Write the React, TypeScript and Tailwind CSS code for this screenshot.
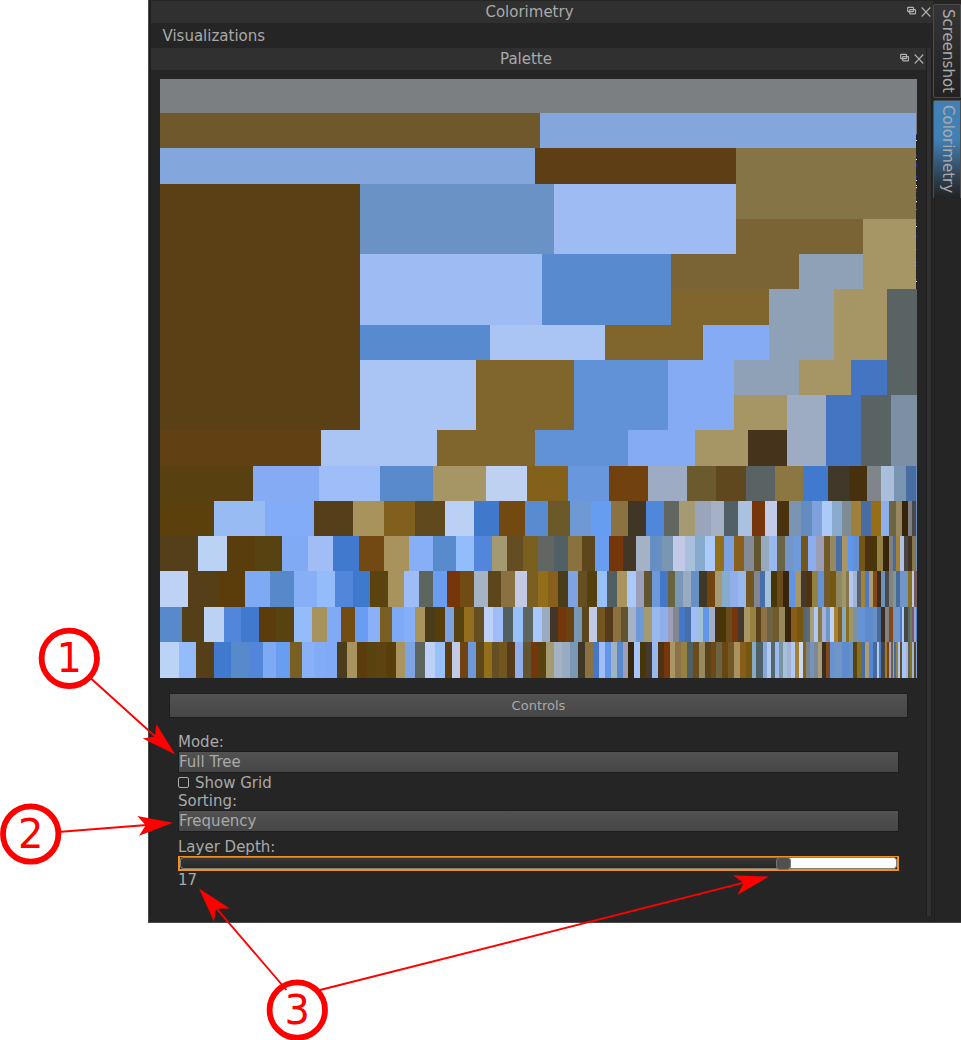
import React from "react";

// Each layer of the tree: "end:colour" spans, read left to right from LEFT.
const LEFT = 160;
const TOP = 79;
const EDGES = [79, 113, 148, 184, 219, 254, 289, 325, 360, 395, 430, 466, 501, 536, 571, 607, 642, 678];

const LAYERS: string[] = [
  "917:7b7f82",
  "540:6e582c 916:83a6dc 917:252525",
  "535:83a6dc 736:5d3e15 916:857546 917:252525",
  "360:5b4016 554:6b92c5 736:9ebcf3 916:857546 917:252525",
  "360:5b4016 554:6b92c5 736:9ebcf3 863:7a6436 916:a69665 917:252525",
  "360:5b4016 542:9ebcf3 671:588acf 799:7a6436 863:8fa1b7 916:a69665 917:252525",
  "360:5b4016 542:9ebcf3 671:588acf 769:80652c 834:8fa1b7 887:a69665 917:596363",
  "360:5b4016 490:588acf 605:aac5f3 703:80652c 769:84abf3 834:8fa1b7 887:a69665 917:596363",
  "360:5b4016 476:aac5f3 574:80652c 668:6191d6 734:84abf3 799:8fa1b7 851:a69665 887:4375c2 917:596363",
  "360:5b4016 476:aac5f3 574:80652c 668:6191d6 734:84abf3 787:a69665 826:9dacc3 861:4375c2 891:596363 917:7d8fa2",
  "321:614014 437:aac5f3 535:80652c 628:6191d6 695:84abf3 748:a69665 787:46331b 826:9dacc3 861:4375c2 891:596363 917:7d8fa2",
  "253:584010 319:84abf3 380:9fbdf8 433:588acc 486:a69665 527:bfd1f1 568:84611b 609:6897de 648:71420f 687:9dacc3 716:6b5a2e 746:5f481d 775:596363 803:8c7641 828:4079ce 849:403828 867:46300d 881:80858c 894:a9bedb 906:7895b2 916:476da3 917:6f92bd",
  "214:5c400c 265:99bbf4 314:82acf7 353:553f1a 384:a9935d 415:80601c 445:60491d 474:bad0f5 499:4078cc 525:724910 548:588bcf 570:6c592a 591:6e99d4 611:679df0 628:8b7341 646:403626 664:5187da 679:616760 695:a69a72 711:9aa5bc 724:a5b2c5 738:516065 752:aac1df 765:76350b 777:c2cbe8 789:4b320e 801:7995b3 812:658cc0 822:7fa2df 832:abcaf8 842:88abce 851:808c95 861:9f803d 871:496da3 881:956e1b 889:8fafeb 896:6b6541 902:978862 908:36250a 912:817f80 916:48494c 917:6f92bd",
  "198:543f1a 227:bcd2f5 255:5a3d0c 282:574312 308:80aaf3 333:a0bdf6 359:4079cd 384:724912 409:a9935d 433:86aff8 456:588bcc 474:93bcfa 492:5186da 507:a49a72 523:644c23 538:79601f 554:616760 568:506064 582:8a7140 595:5c461b 609:689df2 623:76360c 636:423727 650:a5b2c5 662:668ec3 673:7997b2 685:c2cae8 695:a8c0dc 705:87abce 715:abcbfa 724:936e1b 734:7ca1e0 744:895f1d 754:838b95 761:635430 769:97aabd 777:98b9ef 785:6a6444 793:7395c8 801:6f9bda 808:715620 816:8cadee 824:9c9eb5 830:71592a 836:968960 842:476ea7 848:a89765 853:6196ee 859:6591d4 865:755616 871:4d3212 877:473607 883:958241 889:37260a 893:817f80 896:466ba3 900:a68236 904:b1c0df 908:454545 912:433222 916:86784a 917:6f92bd",
  "188:bdd2f4 218:543f19 245:5b3d0c 270:7eaaf3 294:5789c9 317:86aff7 335:94bcfb 353:5186da 370:3f79ce 388:5b430f 404:a9935d 419:a0bcf6 433:5d665e 447:699df1 460:77350c 474:704b13 488:a6b3c5 501:5c461c 515:8b7141 527:c2cae6 538:796022 548:936e1a 558:895f1d 568:4b3c19 578:7da3e3 587:664e23 597:543f0e 607:98c1fa 617:506062 627:aa945d 636:aac9fa 644:9c9fb7 652:635430 660:6d99d9 668:4477ca 675:69633f 683:7998b5 691:98abc0 699:6790c4 707:403826 715:724411 722:a69a71 730:87aacf 738:8faeea 746:98b9ef 754:715620 760:828690 765:476ea8 771:a4c1d9 777:473606 783:6a4c1b 789:37260b 795:5e93e8 801:a89764 806:44382f 812:4e3313 818:958241 824:6592d6 830:725a2c 836:755712 842:908862 846:a0966b 849:877849 853:b1c8ef 857:a5b2d8 861:58636a 865:a68236 869:4b7cc3 873:ad9b71 877:804917 881:3b2c1e 885:6f92bd 889:4a4a4a 893:828284 896:809790 900:476a98 908:7095c8 912:88701f 914:c2cae8 917:725c5c",
  "182:588acb 204:543f18 224:bcd2f5 241:5186da 259:4079cd 276:5b3c0c 294:584310 312:94bcfb 327:a9935d 341:80aaf3 355:724c12 368:699df1 380:8ab1f7 392:796022 404:7eaaf5 415:86aff8 425:aa945d 435:4b3c19 445:583e0a 454:7da3e3 464:564310 474:936e1e 484:664e23 493:bcd0f8 503:a0bbf5 513:506062 523:98c1fa 533:5d665e 542:a6c8fa 550:98abc0 558:423727 566:76360d 574:6b420f 582:7998b5 589:5c461b 597:c2cae6 605:715620 613:563a1a 621:8b7140 628:635430 636:a5b2c6 644:6d99d9 652:a69a71 660:98b9ef 668:8faeea 673:9c9fb7 679:828690 685:4477ca 691:476ea8 697:a0bdf7 703:a1bfd7 709:6196e8 715:a1aec5 720:4b3213 726:473606 732:6a4c1b 738:77350c 744:44382f 750:a89764 756:958241 761:594219 767:8d7247 773:6a6444 779:71592a 785:968960 791:37260a 797:895c19 803:755712 806:56676c 810:5c6976 814:a69d7d 818:b1c8ef 822:86784a 826:a5b2d8 830:7095c8 834:c2d2f1 838:a68236 842:84611b 846:86a9c5 849:88701f 853:a0966b 857:7b929f 865:6693d8 873:5d8bcb 877:6790c4 881:476a98 885:3b2c20 889:828284 893:804917 900:7095c8 902:4b7cc3 904:b1c8ef 908:454545 910:5d6762 912:6d7a66 914:725c6c 916:aaa0bd 917:5187da",
  "179:bbd3f5 196:94bcfb 214:543f19 231:4079cd 249:588acb 263:5186da 276:7eaaf3 290:699df1 302:796022 314:8ab1f7 325:82acf7 337:80aaf5 347:4b3c1b 357:aa945d 367:5b3c0c 376:584310 386:5d4310 396:583e0a 405:aa945d 415:7da3e3 425:5d665e 435:bcd0f8 445:98c1fa 452:5b3c0c 460:c2cae6 468:704310 476:6d99d9 484:5c461b 492:936e1b 499:664e23 507:715620 515:563a1a 523:8faeea 531:635430 538:76360d 546:58430f 554:a69a71 562:a5b2c5 570:98abc0 578:7998b5 585:403826 593:8b7140 599:4477ca 605:a0bdf7 611:6196e8 617:a1b2c2 623:588acb 628:9c9fb7 634:37260c 640:a6c4fa 646:473606 652:44382f 658:98b9ef 664:4e3313 670:77350c 675:a89764 681:8d7247 687:958241 693:506062 699:6a4c1b 705:968960 711:594219 716:714812 722:6a6444 728:6b4611 734:71592a 740:a89260 746:895c19 752:755712 756:86a9c5 763:506068 767:86a9d5 771:b1c8ef 775:56676c 779:98b9ef 783:7b929f 787:a4c1d9 791:a5b2d8 795:b1c8ef 799:a68236 803:c9d9f1 806:84611b 810:828284 814:7095c0 818:828690 822:a69d7d 826:3b2c20 830:804917 834:6693d8 842:7095c8 849:5d8bcb 853:6790c4 857:564513 861:88701f 865:476ea8 869:ad9b71 873:5187da 877:476a98 879:b1c8ef 881:4b7cc3 885:454545 887:a67a26 889:704310 891:aaa0bd 893:6a6444 894:82a5db 896:466ba3 898:958241 900:aac9fa 902:654c1e 906:a5c5fa 908:aab4ca 910:596363 912:88701f 914:98b9d9 916:594219 917:82a5db",
];

const SPECKS: [number, string][] = [
  [134, "#3535c0"], [140, "#fff"], [155, "#3535c0"], [159, "#fff"], [164, "#3535c0"], [166, "#3535c0"],
  [176, "#3535c0"], [180, "#fff"], [185, "#fff"], [187, "#fff"], [188, "#a04525"], [191, "#3535c0"], [197, "#3535c0"],
  [201, "#fff"], [202, "#a04525"], [209, "#a06040"], [223, "#3535c0"], [226, "#fff"], [236, "#3535c0"],
  [249, "#3535c0"], [262, "#3535c0"], [265, "#3535c0"], [279, "#3535c0"], [281, "#fff"],
];

function PaletteChart() {
  return (
    <svg className="block h-[599px] w-[757px]" viewBox={`${LEFT} ${TOP} 757 599`} shapeRendering="crispEdges">
      {LAYERS.map((layer, row) => {
        let x = LEFT;
        return layer.split(" ").map((span) => {
          const [end, colour] = span.split(":");
          const start = x;
          x = Number(end);
          return (
            <rect
              key={`${row}-${end}`}
              x={start}
              y={EDGES[row]}
              width={x - start}
              height={EDGES[row + 1] - EDGES[row]}
              fill={`#${colour}`}
            />
          );
        });
      })}
      <rect x="916" y="113" width="1" height="21" fill="#7b7f82" />
      {SPECKS.map(([y, colour]) => (
        <rect key={y} x="916" y={y} width="1" height="1" fill={colour} />
      ))}
    </svg>
  );
}

function WindowButtons() {
  return (
    <svg width="24" height="12" viewBox="0 0 24 12" fill="none" stroke="#b0b0b0" className="block">
      <rect x="0.7" y="1.4" width="5.8" height="4.2" rx="0.5" strokeWidth="1.2" />
      <rect x="2.7" y="3.6" width="5.8" height="4.2" rx="0.5" strokeWidth="1.2" />
      <path d="M14.7 1.5 23.3 10.5M23.3 1.5 14.7 10.5" strokeWidth="1.1" />
    </svg>
  );
}

function TitleBar({ title }: { title: string }) {
  return (
    <div className="flex h-[22px] w-full shrink-0 items-center bg-[#303030]">
      <span className="min-w-0 flex-1 pl-[2px] text-center">{title}</span>
    </div>
  );
}

function Combo({ value }: { value: string }) {
  return (
    <div className="flex h-[22px] items-center border border-[#1d1d1d] bg-linear-to-b from-[#525252] to-[#464646] leading-[20px]">
      <span>{value}</span>
    </div>
  );
}

function Callouts() {
  const badges: [number, number, string][] = [
    [69.3, 658.3, "1"],
    [30.7, 834, "2"],
    [297.3, 1010, "3"],
  ];
  return (
    <svg className="pointer-events-none absolute top-0 left-0 h-[1040px] w-[961px]" viewBox="0 0 961 1040">
      <g stroke="#f00" strokeWidth="1.9">
        <path d="M91 678.5 158 739M61 831.8 150 824.8M320 990 750 881.2" fill="none" />
      </g>
      <g fill="#f00">
        <path d="M175.3 754.5 156.3 724 155 736.5 142.7 738.6Z" />
        <path d="M173 822.8 137.3 816 145.7 825.2 139 835.8Z" />
        <path d="M199 888.5 229.8 908.5 216 908.8 214 921.5Z" />
        <path d="M769 876.6 732.6 875.3 743.7 882.8 737.4 895Z" />
      </g>
      {badges.map(([x, y, label]) => (
        <g key={label}>
          <circle cx={x} cy={y} r="27.7" fill="#fff" stroke="#f00" strokeWidth="5.8" />
          <text x={x} y={y + 13.8} textAnchor="middle" fontSize="40" fill="#f00">
            {label}
          </text>
        </g>
      ))}
      <path d="M286.5 990 213.5 905" stroke="#f00" strokeWidth="1.9" />
    </svg>
  );
}

export default function App() {
  return (
    <div className="relative h-[1040px] w-[961px] overflow-hidden bg-white pl-[148px] font-['DejaVu_Sans',sans-serif] text-[15px] leading-[18px] text-[#a9a9a9]">
      <div className="flex h-[923px] w-[813px] border-b border-l border-b-[#484848] border-l-[#484848] bg-[#252525]">
        <div className="mt-[1px] flex h-[915px] w-[784px] flex-col border-l-2 border-[#202020]">
          <div className="relative">
            <div className="bg-[#303030] pr-[27px]"><TitleBar title="Colorimetry" /></div>
            <div className="absolute top-[5px] right-[2px]"><WindowButtons /></div>
          </div>
          <div className="flex h-[25px] items-center pl-[11.5px]">Visualizations</div>
          <div className="flex h-[868px]">
            <div className="w-[775px]">
              <div className="relative">
                <div className="bg-[#303030] pr-[27px]"><TitleBar title="Palette" /></div>
                <div className="absolute top-[5px] right-[2px]"><WindowButtons /></div>
              </div>
              <div className="pt-[9px] pl-[9px]">
                <PaletteChart />
              </div>
              <div className="pt-[15px] pl-[18px]">
                <div className="flex h-[25px] w-[739px] items-center justify-center border border-[#1d1d1d] bg-linear-to-b from-[#525252] to-[#464646] text-[13px]">
                  Controls
                </div>
              </div>
              <div className="ml-[27px] w-[721px] pt-[15px]">
                <div className="h-[18px]">Mode:</div>
                <Combo value="Full Tree" />
                <div className="flex h-[19px] items-center">
                  <span className="size-[11px] rounded-[2px] border border-[#b0b0b0]" />
                  <span className="pl-[6px]">Show Grid</span>
                </div>
                <div className="h-[18px]">Sorting:</div>
                <Combo value="Frequency" />
                <div className="h-[24px] pt-[6px]">Layer Depth:</div>
                <div className="flex h-[15px] border-x-2 border-t border-b-2 border-[#ef9124] bg-[#252525]">
                  <div className="h-[12px] w-[600px] rounded-l-[4px] border border-r-0 border-[#858075] bg-linear-to-b from-[#383838] to-[#272727]" />
                  <div className="relative -mx-[4px] -mb-px h-[13px] w-[15px] shrink-0 rounded-[4px] border border-[#777] bg-[#505050]" />
                  <div className="h-[12px] flex-1 rounded-r-[4px] border border-l-0 border-[#858075] bg-white" />
                </div>
                <div>17</div>
              </div>
            </div>
            <div className="h-[868px] w-[6px] border-x border-[#1e1e1e] bg-[#303030]" />
          </div>
        </div>
        <div className="flex h-full w-[28px] flex-col pt-[4px]">
          <div className="flex h-[94px] w-[28px] items-center justify-center rounded-l-[2px] border border-[#4c4c4c] bg-linear-to-b from-[#353535] to-[#222] pl-[2px]">
            <span className="[writing-mode:vertical-rl]">Screenshot</span>
          </div>
          <div className="mt-[2px] flex h-[98px] w-[28px] items-center justify-center rounded-tl-[2px] border border-b-0 border-[#4c4c4c] bg-linear-to-b from-[#4080b5] from-40% to-[#222] pl-[2px]">
            <span className="[writing-mode:vertical-rl]">Colorimetry</span>
          </div>
          <div className="ml-[1px] w-px flex-1 bg-[#1e1e1e]" />
        </div>
      </div>
      <Callouts />
    </div>
  );
}
